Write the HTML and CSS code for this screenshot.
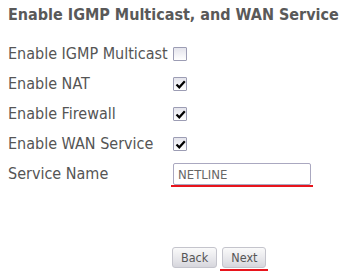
FILE: index.html
```html
<!DOCTYPE html>
<html>
<head>
<meta charset="utf-8">
<link rel="stylesheet" href="styles.css">
</head>
<body>
<h1 class="title">Enable IGMP Multicast, and WAN Service</h1>
<div class="form">
  <div class="label">Enable IGMP Multicast</div>
  <div class="ctl"><span class="cb"></span></div>
  <div class="label">Enable NAT</div>
  <div class="ctl"><span class="cb checked"><svg viewBox="0 0 13 13" width="13" height="13"><path d="M2.5 6.5 L5.3 9.3 L10.8 3.3" fill="none" stroke="#000" stroke-width="2.2"/></svg></span></div>
  <div class="label">Enable Firewall</div>
  <div class="ctl"><span class="cb checked"><svg viewBox="0 0 13 13" width="13" height="13"><path d="M2.5 6.5 L5.3 9.3 L10.8 3.3" fill="none" stroke="#000" stroke-width="2.2"/></svg></span></div>
  <div class="label">Enable WAN Service</div>
  <div class="ctl"><span class="cb checked"><svg viewBox="0 0 13 13" width="13" height="13"><path d="M2.5 6.5 L5.3 9.3 L10.8 3.3" fill="none" stroke="#000" stroke-width="2.2"/></svg></span></div>
  <div class="label">Service Name</div>
  <div class="ctl"><span class="input-wrap"><span class="input">NETLINE</span></span></div>
</div>
<div class="buttons">
  <span class="btn">Back</span>
  <span class="btn-wrap"><span class="btn">Next</span></span>
</div>
</body>
</html>
```
FILE: styles.css
```css
html, body { margin: 0; padding: 0; background: #fff; }
body { font-family: "DejaVu Sans Condensed", "DejaVu Sans", sans-serif; color: #555; }
.title {
  margin: 0; padding: 5px 0 0 8px;
  font-size: 16px; font-weight: bold; color: #595959; line-height: 20px;
}
.form {
  display: grid;
  grid-template-columns: 165px auto;
  grid-auto-rows: 30px;
  margin-top: 14px;
  padding-left: 8px;
  align-items: center;
}
.label { font-size: 16px; line-height: 20px; }
.ctl { display: flex; align-items: center; }
.cb {
  width: 12px; height: 12px; border: 1px solid #9c9db4; border-radius: 1px;
  background: linear-gradient(#e4e4ec, #fff);
  display: block; position: relative;
}
.cb svg { position: absolute; left: 0; top: 0; }
.input-wrap { border-bottom: 2px solid #e8141c; display: block; padding: 0 2px 0 2px; margin-left: -2px; margin-top: 2px; }
.input {
  display: block; width: 128px; height: 20px; border: 1px solid #aaa8c0; border-radius: 2px;
  font-family: "DejaVu Sans Condensed", sans-serif; font-size: 13px; line-height: 21px;
  padding: 0 4px; color: #666;
}
.buttons {
  display: flex; gap: 5px; padding-left: 172px; margin-top: 58px; align-items: flex-start;
}
.btn {
  display: block; height: 19px; line-height: 19px; padding: 0 8px;
  border: 1px solid #c4c4cc; border-radius: 3px;
  background: linear-gradient(#fafafa, #e6e6ea 60%, #d6d6dc);
  font-size: 12.5px; color: #555;
}
.btn-wrap { border-bottom: 2px solid #e8141c; padding: 0 2px 1px 2px; margin-left: -2px; }
```
